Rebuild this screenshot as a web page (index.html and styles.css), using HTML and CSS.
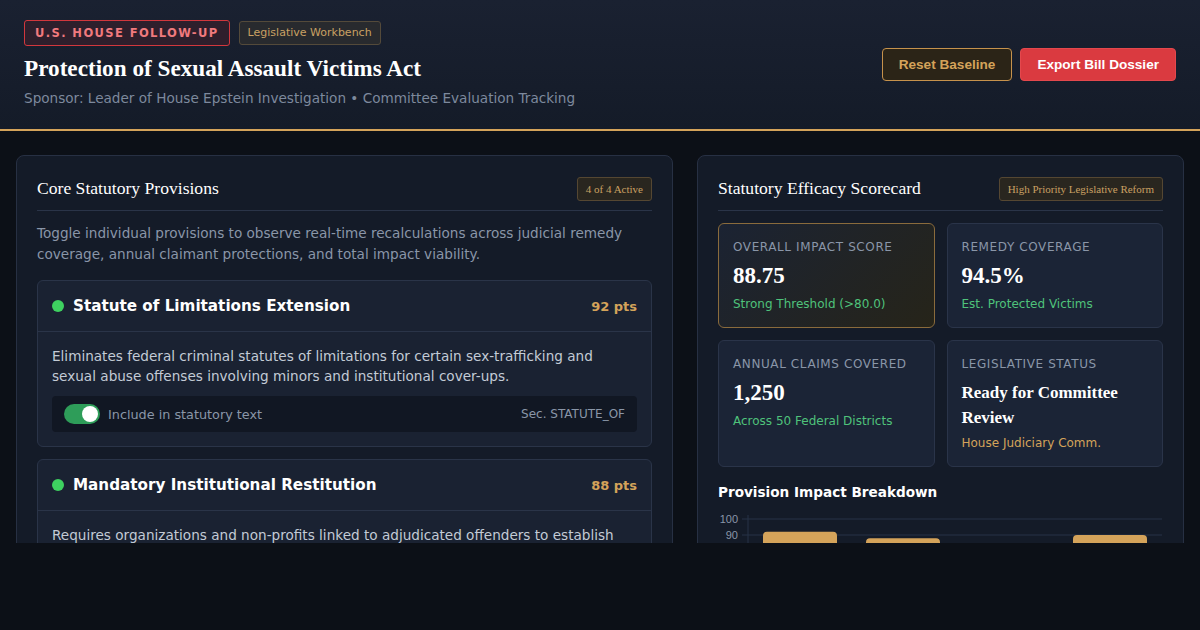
FILE: index.html
```html
<!DOCTYPE html>
<html lang="en">
<head>
    <meta charset="UTF-8">
    <meta name="viewport" content="width=device-width, initial-scale=1.0">
    <title>Protection of Sexual Assault Victims Act - Legislative Workbench</title>
    <link rel="stylesheet" href="styles.css">
</head>
<body>
    <header class="topbar">
        <div class="topbar-info">
            <div class="tags">
                <span class="tag tag-alert">U.S. House Follow-Up</span>
                <span class="tag tag-muted">Legislative Workbench</span>
            </div>
            <h1>Protection of Sexual Assault Victims Act</h1>
            <p class="sponsor">Sponsor: Leader of House Epstein Investigation &bull; Committee Evaluation Tracking</p>
        </div>
        <div class="actions">
            <button class="btn btn-outline" id="resetBtn">Reset Baseline</button>
            <button class="btn btn-primary" id="exportBtn">Export Bill Dossier</button>
        </div>
    </header>

    <main class="workspace">
        <!-- Left: provisions -->
        <section class="panel">
            <div class="panel-head">
                <h2>Core Statutory Provisions</h2>
                <span class="badge">4 of 4 Active</span>
            </div>
            <p class="panel-desc">Toggle individual provisions to observe real-time recalculations across judicial remedy coverage, annual claimant protections, and total impact viability.</p>

            <div class="provision">
                <div class="provision-head">
                    <div class="provision-title"><span class="dot"></span>Statute of Limitations Extension</div>
                    <span class="pts">92 pts</span>
                </div>
                <div class="provision-body">
                    <p>Eliminates federal criminal statutes of limitations for certain sex-trafficking and sexual abuse offenses involving minors and institutional cover-ups.</p>
                    <div class="toggle-row">
                        <label class="toggle-label"><span class="switch on"><span class="knob"></span></span>Include in statutory text</label>
                        <span class="sec">Sec. STATUTE_OF</span>
                    </div>
                </div>
            </div>

            <div class="provision">
                <div class="provision-head">
                    <div class="provision-title"><span class="dot"></span>Mandatory Institutional Restitution</div>
                    <span class="pts">88 pts</span>
                </div>
                <div class="provision-body">
                    <p>Requires organizations and non-profits linked to adjudicated offenders to establish survivor compensation funds overseen by a federal trustee.</p>
                    <div class="toggle-row">
                        <label class="toggle-label"><span class="switch on"><span class="knob"></span></span>Include in statutory text</label>
                        <span class="sec">Sec. RESTITUTION</span>
                    </div>
                </div>
            </div>
        </section>

        <!-- Right: scorecard -->
        <section class="panel">
            <div class="panel-head">
                <h2>Statutory Efficacy Scorecard</h2>
                <span class="badge">High Priority Legislative Reform</span>
            </div>

            <div class="metrics">
                <div class="metric metric-highlight">
                    <div class="metric-label">Overall Impact Score</div>
                    <div class="metric-value">88.75</div>
                    <div class="metric-sub">Strong Threshold (&gt;80.0)</div>
                </div>
                <div class="metric">
                    <div class="metric-label">Remedy Coverage</div>
                    <div class="metric-value">94.5%</div>
                    <div class="metric-sub">Est. Protected Victims</div>
                </div>
                <div class="metric">
                    <div class="metric-label">Annual Claims Covered</div>
                    <div class="metric-value">1,250</div>
                    <div class="metric-sub">Across 50 Federal Districts</div>
                </div>
                <div class="metric">
                    <div class="metric-label">Legislative Status</div>
                    <div class="metric-value metric-status">Ready for Committee Review</div>
                    <div class="metric-sub gold">House Judiciary Comm.</div>
                </div>
            </div>

            <h3 class="chart-title">Provision Impact Breakdown</h3>
            <div class="chart">
                <svg width="445" height="200" viewBox="0 0 445 200">
                    <g class="grid">
                        <line x1="24" y1="8" x2="444" y2="8"/>
                        <line x1="24" y1="24" x2="444" y2="24"/>
                        <line x1="24" y1="40" x2="444" y2="40"/>
                        <line x1="24" y1="56" x2="444" y2="56"/>
                        <line x1="24" y1="72" x2="444" y2="72"/>
                        <line x1="24" y1="88" x2="444" y2="88"/>
                        <line x1="30" y1="4" x2="30" y2="168"/>
                    </g>
                    <g class="ticks">
                        <text x="20" y="12">100</text>
                        <text x="20" y="28">90</text>
                        <text x="20" y="44">80</text>
                        <text x="20" y="60">70</text>
                        <text x="20" y="76">60</text>
                        <text x="20" y="92">50</text>
                    </g>
                    <g class="bars">
                        <rect x="45" y="20.8" width="74" height="160" rx="4"/>
                        <rect x="148" y="27.2" width="74" height="160" rx="4"/>
                        <rect x="251" y="46.4" width="74" height="160" rx="4"/>
                        <rect x="355" y="24" width="74" height="160" rx="4"/>
                    </g>
                </svg>
            </div>
        </section>
    </main>

    <script>
        // Toggle provisions on and off
        document.querySelectorAll('.switch').forEach(sw => {
            sw.addEventListener('click', () => sw.classList.toggle('on'));
        });
    </script>
</body>
</html>
```

FILE: styles.css
```css
* {
    box-sizing: border-box;
    margin: 0;
    padding: 0;
}

body {
    font-family: "DejaVu Sans", Verdana, sans-serif;
    background-color: #0c1017;
    color: #e6e9ef;
}

/* Header */
.topbar {
    display: flex;
    justify-content: space-between;
    align-items: center;
    height: 131px;
    padding: 0 24px 2px;
    background: linear-gradient(180deg, #1a2131 0%, #141b28 100%);
    border-bottom: 2px solid #d4a35a;
}

.actions {
    display: flex;
    gap: 8px;
    margin-top: 2px;
}

.tags {
    display: flex;
    align-items: center;
    gap: 9px;
}

.tag {
    display: inline-block;
    border-radius: 3px;
}

.tag-alert {
    padding: 5px 10px;
    font-size: 11.5px;
    font-weight: bold;
    line-height: 14px;
    letter-spacing: 1.4px;
    text-transform: uppercase;
    color: #f07a7e;
    background-color: #2e1f2c;
    border: 1px solid #d2373d;
}

.tag-muted {
    padding: 4px 8px;
    font-size: 11px;
    line-height: 14px;
    color: #c9a063;
    background-color: #282a2e;
    border: 1px solid #544a3a;
}

.topbar h1 {
    margin-top: 7px;
    font-family: "Liberation Serif", "Times New Roman", serif;
    font-size: 23.2px;
    font-weight: bold;
    line-height: 30px;
    color: #ffffff;
}

.sponsor {
    margin-top: 6px;
    font-size: 13.6px;
    line-height: 18px;
    color: #7d899d;
}

.btn {
    font-family: "Liberation Sans", Arial, sans-serif;
    font-size: 13.6px;
    font-weight: bold;
    line-height: 15px;
    padding: 8px 16px;
    border-radius: 4px;
    cursor: pointer;
}

.btn-outline {
    color: #d4a35a;
    background-color: #2b2417;
    border: 1px solid #c6924c;
}

.btn-primary {
    color: #ffffff;
    background-color: #da3a40;
    border: 1px solid #e4484d;
}

/* Workspace */
.workspace {
    display: grid;
    grid-template-columns: 1.35fr 1fr;
    gap: 24px;
    height: 412px;
    overflow: hidden;
    padding: 24px 16px 0;
}

.panel {
    background-color: #141b28;
    border: 1px solid #273043;
    border-radius: 8px;
    padding: 20px;
}

.panel-head {
    display: flex;
    justify-content: space-between;
    align-items: center;
    padding-bottom: 9px;
    border-bottom: 1px solid #2a3448;
}

.panel-head h2 {
    font-family: "Liberation Serif", "Times New Roman", serif;
    font-size: 17.6px;
    font-weight: normal;
    line-height: 25px;
    color: #ffffff;
}

.badge {
    font-family: "Liberation Serif", "Times New Roman", serif;
    font-size: 11px;
    line-height: 14px;
    padding: 4px 8px;
    color: #c9a063;
    background-color: #29261f;
    border: 1px solid #554732;
    border-radius: 3px;
}

.panel-desc {
    margin: 12px 0 15px;
    font-size: 13.6px;
    line-height: 21px;
    color: #8a96a8;
}

/* Provision cards */
.provision {
    background-color: #1a2232;
    border: 1px solid #2a3448;
    border-radius: 6px;
    margin-bottom: 12px;
}

.provision-head {
    display: flex;
    justify-content: space-between;
    align-items: center;
    padding: 14px;
    border-bottom: 1px solid #2a3448;
}

.provision-title {
    display: flex;
    align-items: center;
    gap: 9px;
    font-size: 15.2px;
    font-weight: bold;
    line-height: 22px;
    color: #ffffff;
}

.dot {
    width: 12px;
    height: 12px;
    border-radius: 50%;
    background-color: #3ed160;
}

.pts {
    font-size: 13px;
    font-weight: bold;
    color: #d4a35a;
}

.provision-body {
    padding: 14px;
}

.provision-body p {
    font-size: 13.6px;
    line-height: 20px;
    color: #c3cbd6;
}

.toggle-row {
    display: flex;
    justify-content: space-between;
    align-items: center;
    margin-top: 10px;
    padding: 8px 12px;
    background-color: #111723;
    border-radius: 4px;
}

.toggle-label {
    display: flex;
    align-items: center;
    gap: 8px;
    font-size: 12.8px;
    color: #8a96a8;
}

.switch {
    position: relative;
    width: 36px;
    height: 20px;
    border-radius: 10px;
    background-color: #3a4458;
    cursor: pointer;
}

.switch.on {
    background-color: #2e9d59;
}

.knob {
    position: absolute;
    top: 2px;
    left: 2px;
    width: 16px;
    height: 16px;
    border-radius: 50%;
    background-color: #ffffff;
}

.switch.on .knob {
    left: 18px;
}

.sec {
    font-size: 12px;
    color: #8a96a8;
}

/* Scorecard */
.metrics {
    display: grid;
    grid-template-columns: 1fr 1fr;
    gap: 12px;
    margin-top: 12px;
}

.metric {
    background-color: #1b2436;
    border: 1px solid #2a3449;
    border-radius: 6px;
    padding: 15px 14px;
}

.metric-highlight {
    background: linear-gradient(135deg, #1b2333 0%, #262419 100%);
    border-color: #8a6b3c;
}

.metric-label {
    font-size: 12px;
    line-height: 16px;
    letter-spacing: 0.6px;
    text-transform: uppercase;
    color: #8a96a8;
}

.metric-value {
    margin-top: 6px;
    font-family: "Liberation Serif", "Times New Roman", serif;
    font-size: 23px;
    font-weight: bold;
    line-height: 30px;
    color: #ffffff;
}

.metric-status {
    margin-top: 8px;
    font-size: 17px;
    line-height: 25px;
}

.metric-sub {
    margin-top: 5px;
    font-size: 12px;
    line-height: 16px;
    color: #4fc27b;
}

.metric-sub.gold {
    color: #d4a35a;
}

.chart-title {
    margin-top: 16px;
    font-size: 13.6px;
    font-weight: bold;
    line-height: 18px;
    color: #ffffff;
}

.chart {
    margin-top: 10px;
}

.chart .grid line {
    stroke: #273246;
    stroke-width: 1;
}

.chart .ticks text {
    font-family: "Liberation Sans", Arial, sans-serif;
    font-size: 11px;
    fill: #8a96a8;
    text-anchor: end;
}

.chart .bars rect {
    fill: #d4a35a;
}
```
